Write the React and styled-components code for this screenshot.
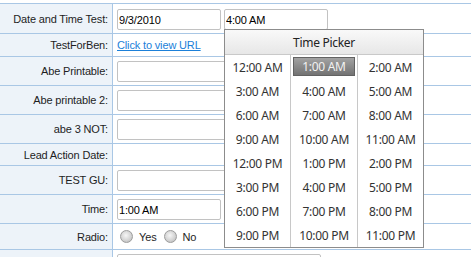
import React from "react";
import styled, { createGlobalStyle } from "styled-components";

const GlobalStyle = createGlobalStyle`
  html, body { margin: 0; padding: 0; background: #ffffff; }
  body {
    font-family: "Liberation Sans", Arial, sans-serif;
    font-size: 11px;
    color: #1e1e1e;
  }
`;

const LINE = "#a9c7e5";

const Form = styled.div`
  margin-top: 3px;
  border-top: 1px solid ${LINE};
  width: 100%;
`;

const Row = styled.div`
  display: grid;
  grid-template-columns: 113px 1fr;
  height: ${(p) => p.$h}px;
  border-bottom: 1px solid ${LINE};
`;

const Label = styled.div`
  box-sizing: border-box;
  background: #edf3f9;
  border-right: 1px solid ${LINE};
  display: flex;
  align-items: center;
  justify-content: flex-end;
  padding-right: 4px;
  letter-spacing: -0.15px;
  white-space: nowrap;
  color: #1e1e1e;
`;

const Value = styled.div`
  display: flex;
  align-items: flex-start;
  padding: ${(p) => p.$top || 0}px 0 0 4px;
  gap: 3px;
  min-width: 0;
`;

const Centered = styled(Value)`
  align-items: center;
  padding-top: 0;
`;

const TextInput = styled.input`
  box-sizing: border-box;
  width: ${(p) => p.$w}px;
  height: 21px;
  margin: 0;
  padding: 0 1px;
  border: 1px solid #c2c2c2;
  border-radius: 2px;
  background: #ffffff;
  font-family: "Liberation Sans", Arial, sans-serif;
  font-size: 11px;
  letter-spacing: -0.15px;
  color: #000000;
  outline: none;
`;

const Link = styled.a`
  color: #1b80d9;
  text-decoration: underline;
  letter-spacing: -0.15px;
  cursor: pointer;
`;

const TimeField = styled.span`
  position: relative;
  display: inline-flex;
`;

const Picker = styled.div`
  position: absolute;
  top: 20px;
  left: 0;
  z-index: 10;
  box-sizing: border-box;
  width: 200px;
  border: 1px solid #8c8c8c;
  background: #ffffff;
  font-family: "Noto Sans", "Open Sans", sans-serif;
`;

const PickerHeader = styled.div`
  height: 24px;
  border-bottom: 1px solid #c9c9c9;
  background: linear-gradient(#f9f9f9, #e7e7e7);
  display: flex;
  align-items: center;
  justify-content: center;
  font-size: 12px;
  letter-spacing: -0.3px;
  color: #222222;
`;

const PickerGrid = styled.div`
  display: grid;
  grid-template-columns: 65px 67px 66px;
  grid-auto-rows: 24px;
`;

const Slot = styled.div`
  box-sizing: border-box;
  display: flex;
  align-items: center;
  justify-content: center;
  border-left: ${(p) => (p.$divided ? "1px solid #c8c8c8" : "none")};
  font-size: 12px;
  letter-spacing: -0.3px;
  color: #333333;
  white-space: nowrap;
`;

const Selected = styled.span`
  box-sizing: border-box;
  align-self: flex-start;
  margin-top: 2px;
  width: 62px;
  height: 19px;
  display: flex;
  align-items: center;
  justify-content: center;
  border: 1px solid #626262;
  background: linear-gradient(#a2a2a2, #737373);
  color: #f2f2f2;
`;

const RadioGroup = styled.div`
  display: flex;
  align-items: center;
  padding-left: 3px;
  gap: 7px;
`;

const RadioOption = styled.label`
  display: flex;
  align-items: center;
  gap: 6px;
  font-size: 11px;
  letter-spacing: -0.15px;
  color: #1e1e1e;
`;

const RadioDot = styled.span`
  box-sizing: border-box;
  width: 13px;
  height: 13px;
  border-radius: 50%;
  border: 1px solid #9c9c9c;
  background: radial-gradient(circle at 45% 40%, #f6f6f6 0%, #d4d4d4 55%, #b4b4b4 100%);
`;

const times = [
  "12:00 AM", "1:00 AM", "2:00 AM",
  "3:00 AM", "4:00 AM", "5:00 AM",
  "6:00 AM", "7:00 AM", "8:00 AM",
  "9:00 AM", "10:00 AM", "11:00 AM",
  "12:00 PM", "1:00 PM", "2:00 PM",
  "3:00 PM", "4:00 PM", "5:00 PM",
  "6:00 PM", "7:00 PM", "8:00 PM",
  "9:00 PM", "10:00 PM", "11:00 PM",
];

function TimePicker({ selected }) {
  return (
    <Picker>
      <PickerHeader>Time Picker</PickerHeader>
      <PickerGrid>
        {times.map((t, i) => (
          <Slot key={t} $divided={i % 3 !== 0}>
            {t === selected ? <Selected>{t}</Selected> : t}
          </Slot>
        ))}
      </PickerGrid>
    </Picker>
  );
}

export default function App() {
  return (
    <>
      <GlobalStyle />
      <Form>
        <Row $h={29}>
          <Label>Date and Time Test:</Label>
          <Value $top={5}>
            <TextInput $w={104} readOnly value="9/3/2010" />
            <TimeField>
              <TextInput $w={104} readOnly value="4:00 AM" />
              <TimePicker selected="1:00 AM" />
            </TimeField>
          </Value>
        </Row>
        <Row $h={22}>
          <Label>TestForBen:</Label>
          <Centered>
            <Link>Click to view URL</Link>
          </Centered>
        </Row>
        <Row $h={28}>
          <Label>Abe Printable:</Label>
          <Value $top={4}>
            <TextInput $w={204} readOnly value="" />
          </Value>
        </Row>
        <Row $h={28}>
          <Label>Abe printable 2:</Label>
          <Value $top={4}>
            <TextInput $w={204} readOnly value="" />
          </Value>
        </Row>
        <Row $h={28}>
          <Label>abe 3 NOT:</Label>
          <Value $top={4}>
            <TextInput $w={204} readOnly value="" />
          </Value>
        </Row>
        <Row $h={21}>
          <Label>Lead Action Date:</Label>
          <Centered />
        </Row>
        <Row $h={28}>
          <Label>TEST GU:</Label>
          <Value $top={4}>
            <TextInput $w={204} readOnly value="" />
          </Value>
        </Row>
        <Row $h={28}>
          <Label>Time:</Label>
          <Value $top={4}>
            <TextInput $w={104} readOnly value="1:00 AM" />
          </Value>
        </Row>
        <Row $h={25}>
          <Label>Radio:</Label>
          <Centered>
            <RadioGroup>
              <RadioOption>
                <RadioDot />
                Yes
              </RadioOption>
              <RadioOption>
                <RadioDot />
                No
              </RadioOption>
            </RadioGroup>
          </Centered>
        </Row>
        <Row $h={28}>
          <Label></Label>
          <Value $top={4}>
            <TextInput $w={204} readOnly value="" />
          </Value>
        </Row>
      </Form>
    </>
  );
}
